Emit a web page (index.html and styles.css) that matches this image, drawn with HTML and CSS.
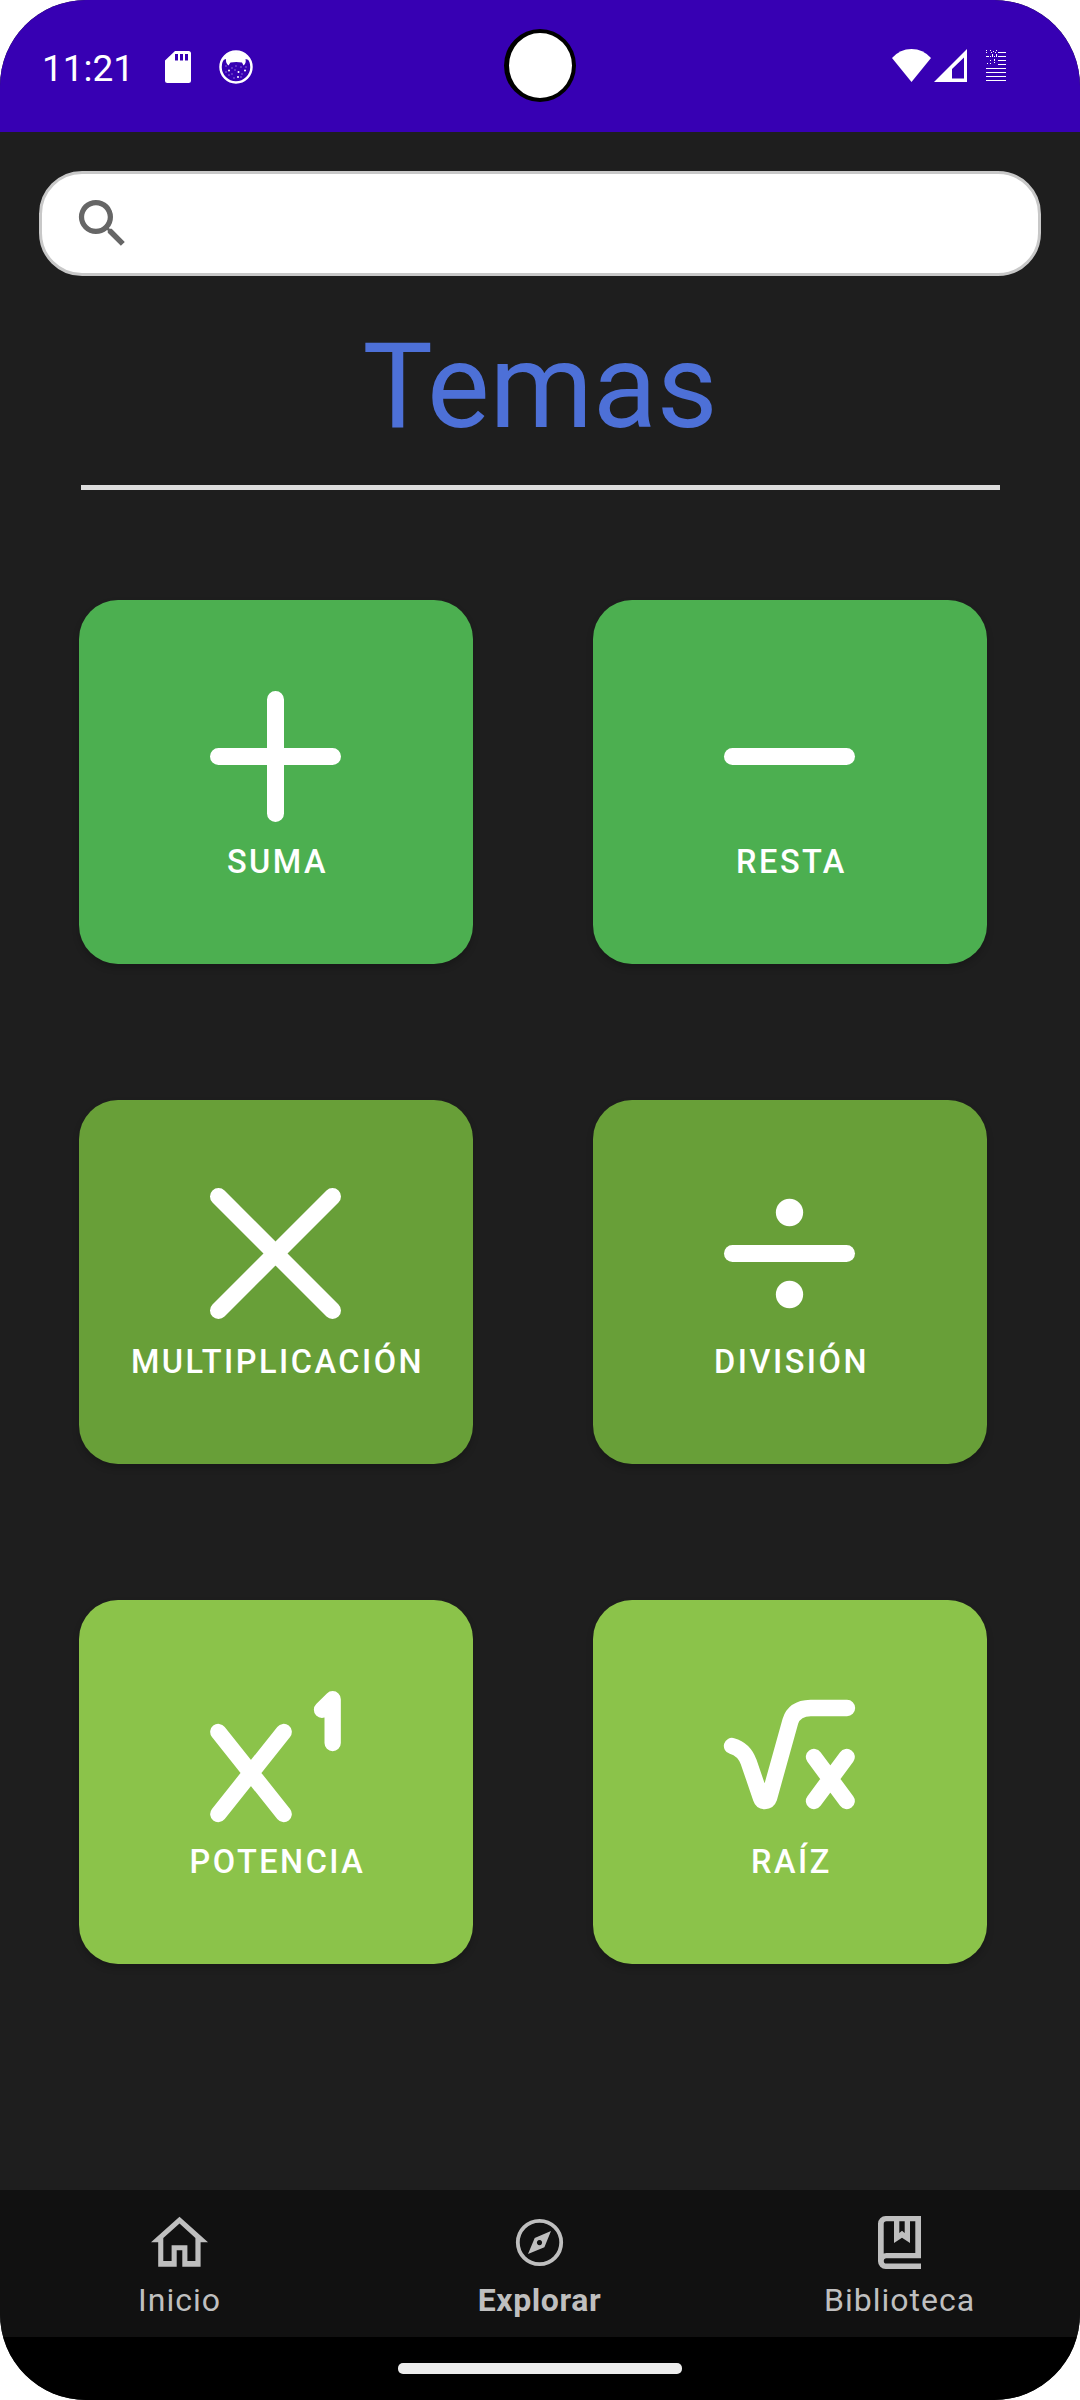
FILE: index.html
```html
<!DOCTYPE html>
<html lang="es">
<head>
<meta charset="utf-8">
<title>Temas</title>
<link rel="stylesheet" href="styles.css">
</head>
<body>
<div class="screen">
  <header class="status">
    <div class="status-left">
      <span class="clock">11:21</span>
      <svg class="sd" viewBox="0 0 26 32"><path fill="#fff" fill-rule="evenodd" d="M10 0H23.500a2.500 2.500 0 0 1 2.500 2.500V29.500a2.500 2.500 0 0 1-2.500 2.500H2.500A2.500 2.500 0 0 1 0 29.500V9.500ZM10 3V9.500H13V3ZM15 3V9.500H18V3ZM20 3V9.500H23V3Z"/></svg>
      <svg class="cat" viewBox="0 0 34 34">
        <circle cx="17" cy="17" r="15.500" fill="none" stroke="#fff" stroke-width="2.500"/>
        <path fill="#fff" d="M4 10Q8 2 17 2T30 10L26.500 9Q27.500 13 24.500 15.500L23 12.500Q17 11.500 11.500 12.500L9.500 15.500Q6.500 13 7 9Z"/>
        <path stroke="#fff" stroke-width="2" stroke-linecap="round" d="M10 20.500h.01M19.500 22h.01M26 20.500h.01M19 27h.01"/>
        <path stroke="#fff" stroke-width="1" stroke-linecap="round" d="M7 16h.01M13 18h.01M22 17h.01M27 17h.01M7 22h.01M13 24h.01M23 24h.01M16 20h.01M15 28h.01M22 27h.01M10 25h.01M17 16h.01"/>
      </svg>
    </div>
    <div class="camera"></div>
    <div class="status-right">
      <svg class="wifi" viewBox="0 0 39 33"><path fill="#fff" d="M0 9Q8 0 19.500 0T39 9L19.500 33Z"/></svg>
      <svg class="signal" viewBox="0 0 33 33"><path fill="#fff" fill-rule="evenodd" d="M33 0V33H0ZM30 8.500L18 20V29.500H30Z"/></svg>
      <svg class="battery" viewBox="0 0 20 32" shape-rendering="crispEdges">
        <path fill="#fff" d="M12 2h8v1h-8zM12 6h8v1h-8zM12 10h8v1h-8zM12 14h8v1h-8zM0 18h20v1H0zM0 22h20v1H0zM0 26h20v1H0zM0 30h20v1H0z"/>
        <path fill="#fff" d="M0 0h1v1H0zM4 0h1v1H4zM7 1h1v1H7zM10 0h1v1h-1zM0 2h1v1H0zM5 2h1v1H5zM9 2h1v1H9zM6 4h1v3H6zM10 4h1v3h-1zM0 6h3v1H0zM4 6h1v1H4zM8 6h1v1H8zM4 10h1v1H4zM8 9h1v2H8zM1 13h1v1H1zM4 13h1v1H4zM8 12h1v1H8z"/>
      </svg>
    </div>
  </header>

  <main class="content">
    <div class="search">
      <svg class="search-icon" viewBox="0 0 24 24"><path fill="#666" d="M15.500 14h-.79l-.28-.27A6.471 6.471 0 0 0 16 9.500 6.500 6.500 0 1 0 9.500 16c1.610 0 3.090-.59 4.230-1.570l.27.28v.79l5 4.990L20.490 19l-4.990-5zm-6 0C7.010 14 5 11.990 5 9.500S7.010 5 9.500 5 14 7.010 14 9.500 11.990 14 9.500 14z"/></svg>
    </div>
    <h1 class="title">Temas</h1>
    <div class="rule"></div>

    <div class="grid">
      <div class="card green">
        <svg class="icon" viewBox="0 0 432 432"><path class="thick" d="M214.500 46.500V388.500M43.500 217.500H385.500"/></svg>
        <span class="label">SUMA</span>
      </div>
      <div class="card green">
        <svg class="icon" viewBox="0 0 432 432"><path class="thick" d="M43.500 217.500H385.500"/></svg>
        <span class="label">RESTA</span>
      </div>
      <div class="card olive">
        <svg class="icon" viewBox="0 0 432 432"><path class="thick" d="M43.500 37.500L385.500 379.500M385.500 37.500L43.500 379.500"/></svg>
        <span class="label">MULTIPLICACIÓN</span>
      </div>
      <div class="card olive">
        <svg class="icon" viewBox="0 0 432 432"><path class="thick" d="M43.500 208.500H385.500"/><circle cx="214.500" cy="85.500" r="41" fill="#fff"/><circle cx="214.500" cy="331.500" r="41" fill="#fff"/></svg>
        <span class="label">DIVISIÓN</span>
      </div>
      <div class="card lime">
        <svg class="icon" viewBox="0 0 432 432"><path class="thin" d="M43 144L239 390M239 144L43 390M354 77.500L386 45.500V177"/></svg>
        <span class="label">POTENCIA</span>
      </div>
      <div class="card lime">
        <svg class="icon" viewBox="0 0 432 432"><path class="thin" d="M42 186Q78 196 92 234L129 342Q132 351 140.500 351Q150 351 153 342L217 112Q229 73 278 72H387M288 219L386 351M386 219L288 351"/></svg>
        <span class="label">RAÍZ</span>
      </div>
    </div>
  </main>

  <nav class="nav">
    <div class="tab">
      <svg class="tab-icon" viewBox="0 0 63 63"><path fill="#bfbfbf" fill-rule="evenodd" d="M31.500 5.700L3 31.300H10.200V55.700H28.700V39.300H34.300V55.700H52.600V31.300H60ZM15.300 27L31.500 12.500L47.400 27V50H39.400V34.300H23.600V50H15.300Z"/></svg>
      <span>Inicio</span>
    </div>
    <div class="tab active">
      <svg class="tab-icon" viewBox="0 0 63 63"><circle cx="31.500" cy="31.500" r="21.700" fill="none" stroke="#bfbfbf" stroke-width="3.800"/><path fill="#bfbfbf" fill-rule="evenodd" d="M43 20L36.400 36.200L20 43L26.700 27ZM31.500 29a2.600 2.600 0 1 0 .01 0Z"/></svg>
      <span>Explorar</span>
    </div>
    <div class="tab">
      <svg class="tab-icon" viewBox="0 0 63 63"><path fill="#bfbfbf" fill-rule="evenodd" d="M17.700 5H53V47.300H18.400a2.600 2.600 0 0 0 0 5.200H53V58H17.700A7.700 7.700 0 0 1 10 50.300V12.700A7.700 7.700 0 0 1 17.700 5ZM18.400 10.300H26V32L34 26.700L42 32V10.300H47.300V42H18.400q-1.400 0-2.700.5V13a2.700 2.700 0 0 1 2.700-2.700ZM31.300 10.300H36.700V22L34 19.700L31.300 22Z"/></svg>
      <span>Biblioteca</span>
    </div>
  </nav>
  <footer class="gesture"><div class="pill"></div></footer>
</div>
</body>
</html>
```
FILE: styles.css
```css
* { box-sizing: border-box; }
body { margin: 0; background: #fff; font-family: Roboto, "Liberation Sans", sans-serif; }
svg { display: block; flex: none; }
.screen {
  width: 1080px; height: 2400px; display: flex; flex-direction: column;
  background: #1e1e1e; border-radius: 86px; overflow: hidden;
}

.status {
  height: 132px; background: #3700b3; color: #fff;
  display: grid; grid-template-columns: 1fr 72px 1fr; align-items: start;
}
.status-left { display: flex; padding: 50px 0 0 42px; }
.clock { width: 123px; font-size: 37px; line-height: 38px; }
.sd { width: 26px; height: 32px; margin-top: 1px; }
.cat { width: 34px; height: 34px; margin-left: 28px; }
.camera { width: 72px; height: 73px; margin-top: 29px; border-radius: 50%; background: #fff; border: 4px solid #000; border-left-width: 5px; }
.status-right { display: flex; justify-content: flex-end; padding: 49px 74px 0 0; }
.wifi { width: 39px; height: 33px; }
.signal { width: 33px; height: 33px; margin-left: 3px; }
.battery { width: 20px; height: 32px; margin: 1px 0 0 19px; }

.content { flex: 1; }
.search {
  height: 105px; margin: 39px 39px 0; padding-left: 29px;
  display: flex; align-items: center;
  background: #fff; border: 3px solid #c8c8c8; border-radius: 43px;
}
.search-icon { width: 63px; height: 63px; }
.title {
  margin: 42px 0 0; text-align: center; color: #4d70d7;
  font-size: 118px; font-weight: 400; line-height: 138px; letter-spacing: -0.2px;
}
.rule { height: 5px; margin: 29px 80px 0 81px; background: #ddd; }
.grid {
  display: grid; grid-template-columns: 394px 394px; grid-auto-rows: 364px;
  column-gap: 120px; row-gap: 136px; margin: 110px 0 0 79px;
}
.card {
  display: flex; flex-direction: column; align-items: center; padding-top: 84px;
  border-radius: 39px; box-shadow: 0 4px 7px rgba(0, 0, 0, .2);
}
.green { background: #4caf50; }
.olive { background: #689f38; }
.lime { background: #8bc34a; }
.icon { width: 144px; height: 144px; }
.thick, .thin { fill: none; stroke: #fff; stroke-linecap: round; stroke-linejoin: round; }
.thick { stroke-width: 51; }
.thin { stroke-width: 49; }
.label {
  margin-top: 12px; padding-left: 3px; color: #fff; white-space: nowrap;
  font-size: 32.5px; font-weight: 500; line-height: 44px; letter-spacing: 2.5px;
}

.nav { height: 147px; display: grid; grid-template-columns: repeat(3, 1fr); background: #111; }
.tab {
  display: flex; flex-direction: column; align-items: center; padding: 21px 1px 0 0;
  color: #bfbfbf; font-size: 32px; line-height: 44px; letter-spacing: 1px;
}
.tab span { margin-top: 4px; }
.tab-icon { width: 63px; height: 63px; }
.active { font-weight: 700; letter-spacing: 0.6px; }
.gesture { height: 63px; background: #000; display: flex; justify-content: center; padding-top: 26px; }
.pill { width: 284px; height: 11px; border-radius: 5px; background: #ececec; }
```
